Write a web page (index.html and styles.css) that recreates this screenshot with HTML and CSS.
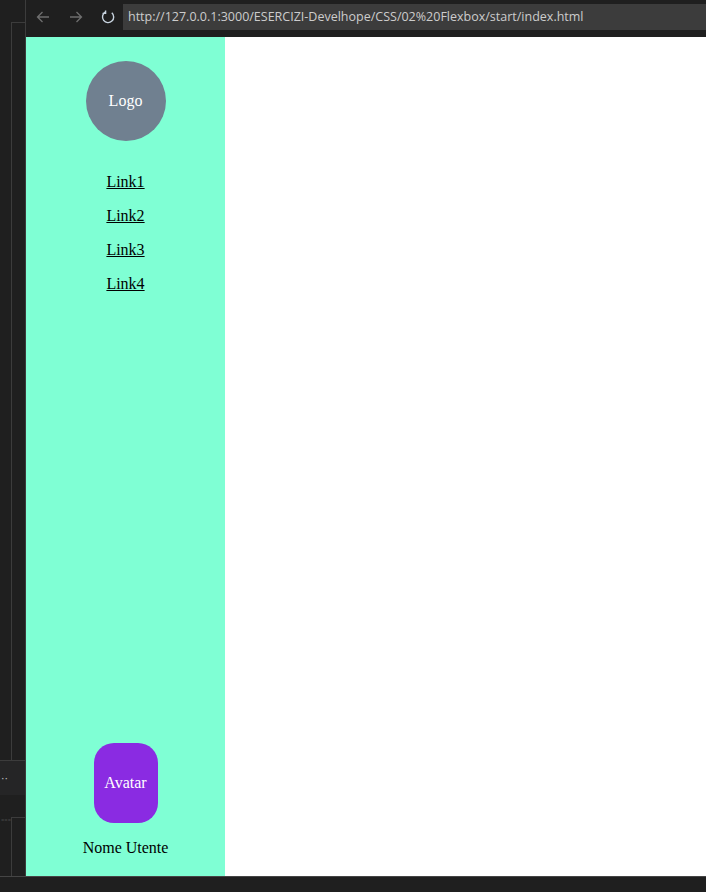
FILE: index.html
```html
<!DOCTYPE html>
<html lang="it">
<head>
<meta charset="utf-8">
<title>Flexbox</title>
<link rel="stylesheet" href="styles.css">
</head>
<body>
<div class="frame">
  <div class="strip">
    <div class="strip-top"></div>
    <div class="strip-box strip-box-main"></div>
    <div class="strip-panel"><span class="dots">··</span></div>
    <div class="strip-gap"></div>
    <div class="strip-box strip-box-low"><span class="tiny">=== </span></div>
  </div>
  <div class="browser">
    <div class="toolbar">
      <span class="nav-btn">
        <svg width="16" height="16" viewBox="0 0 16 16"><path d="M14 8H2.5M7.5 3L2.5 8l5 5" fill="none" stroke="#6e6e6e" stroke-width="1.3"/></svg>
      </span>
      <span class="nav-btn">
        <svg width="16" height="16" viewBox="0 0 16 16"><path d="M2 8h11.5M8.5 3l5 5-5 5" fill="none" stroke="#6e6e6e" stroke-width="1.3"/></svg>
      </span>
      <span class="nav-btn reload">
        <svg width="16" height="16" viewBox="0 0 16 16"><path d="M11.8 3.8A5.6 5.6 0 1 1 5.2 3.2" fill="none" stroke="#c8d4e0" stroke-width="1.4"/><path d="M5.6 1.4V4.4H2.6" fill="none" stroke="#c8d4e0" stroke-width="1.4"/></svg>
      </span>
      <div class="url">http://127.0.0.1:3000/ESERCIZI-Develhope/CSS/02%20Flexbox/start/index.html</div>
    </div>
    <div class="page">
      <aside class="sidebar">
        <div class="sidebar-top">
          <div class="logo">Logo</div>
          <nav class="links">
            <a href="#">Link1</a>
            <a href="#">Link2</a>
            <a href="#">Link3</a>
            <a href="#">Link4</a>
          </nav>
        </div>
        <div class="user">
          <div class="avatar">Avatar</div>
          <div class="username">Nome Utente</div>
        </div>
      </aside>
      <main class="content"></main>
    </div>
  </div>
</div>
<div class="statusbar"></div>
</body>
</html>
```

FILE: styles.css
```css
* { box-sizing: border-box; }
html, body { margin: 0; padding: 0; }
body {
  width: 706px;
  height: 892px;
  overflow: hidden;
  background: #1f1f1f;
  font-family: "Liberation Serif", "Times New Roman", serif;
}
.frame {
  display: flex;
  height: 876px;
}
.strip {
  width: 26px;
  flex: 0 0 26px;
  border-right: 1px solid #3c3c3c;
  display: flex;
  flex-direction: column;
  background: #1f1f1f;
}
.strip-top { height: 22px; }
.strip-box {
  margin-left: 11px;
  border-left: 1px solid #3c3c3c;
  border-top: 1px solid #3c3c3c;
}
.strip-box-main { height: 738px; }
.strip-panel {
  height: 35px;
  background: #252526;
  border-top: 1px solid #3c3c3c;
  display: flex;
  align-items: center;
  padding-left: 1px;
}
.dots {
  color: #bbbbbb;
  font-family: "DejaVu Sans", sans-serif;
  font-size: 11px;
  line-height: 1;
}
.strip-gap { height: 22px; }
.strip-box-low {
  flex: 1;
  position: relative;
}
.tiny {
  position: absolute;
  left: -11px;
  top: -1px;
  font-family: "DejaVu Sans", sans-serif;
  font-size: 4px;
  color: #777;
}
.browser {
  flex: 1;
  display: flex;
  flex-direction: column;
  min-width: 0;
}
.toolbar {
  height: 37px;
  display: flex;
  align-items: flex-start;
  background: #1f1f1f;
  padding-top: 4px;
}
.nav-btn {
  width: 32px;
  height: 26px;
  display: flex;
  align-items: center;
  justify-content: center;
  flex: 0 0 auto;
}
.nav-btn:first-child { width: 34px; }
.nav-btn svg { display: block; }
.reload { width: 31px; }
.url {
  flex: 1;
  height: 26px;
  background: #3c3c3c;
  color: #cccccc;
  font-family: "Open Sans", "Noto Sans", sans-serif;
  font-size: 12.5px;
  line-height: 26px;
  padding-left: 5px;
  white-space: nowrap;
  overflow: hidden;
}
.page {
  flex: 1;
  display: flex;
  background: #ffffff;
}
.sidebar {
  width: 199px;
  flex: 0 0 199px;
  background: #7fffd4;
  display: flex;
  flex-direction: column;
  justify-content: space-between;
  align-items: center;
  padding: 24px 0 19px;
  font-size: 16px;
}
.sidebar-top {
  display: flex;
  flex-direction: column;
  align-items: center;
}
.logo {
  width: 80px;
  height: 80px;
  border-radius: 50%;
  background: #708090;
  color: #ffffff;
  display: flex;
  align-items: center;
  justify-content: center;
}
.links {
  margin-top: 32px;
  display: flex;
  flex-direction: column;
  align-items: center;
  gap: 16px;
}
.links a {
  color: #000000;
  text-decoration: underline;
}
.user {
  display: flex;
  flex-direction: column;
  align-items: center;
  gap: 16px;
}
.avatar {
  width: 64px;
  height: 80px;
  border-radius: 20px;
  background: #8a2be2;
  color: #ffffff;
  display: flex;
  align-items: center;
  justify-content: center;
}
.username { color: #000000; }
.content { flex: 1; }
.statusbar {
  height: 16px;
  border-top: 1px solid #454545;
  background: #1f1f1f;
}
```
